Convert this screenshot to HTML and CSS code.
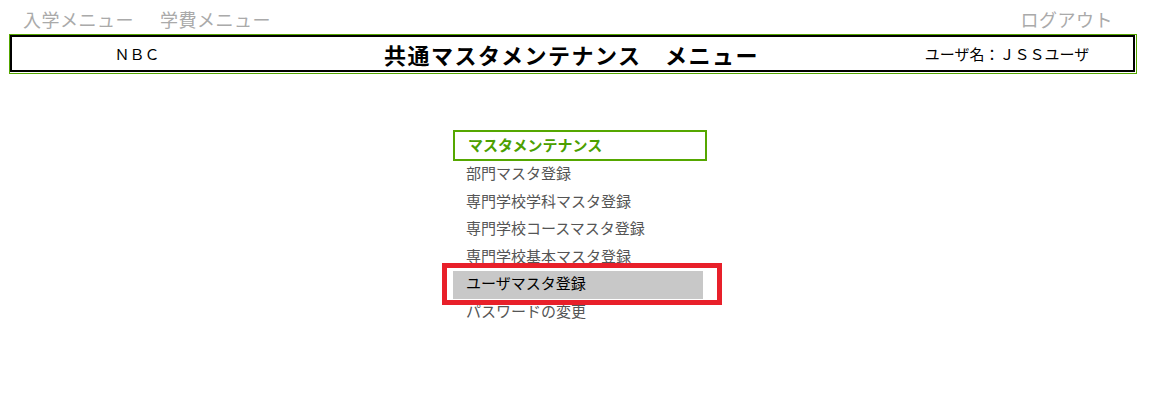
FILE: index.html
```html
<html>
<head>
    <meta charset="UTF-8">
    <link rel="stylesheet" href="styles.css">
</head>

<body>

<div class="page">
    <div class="topbar">
        <div class="nav">
            <a href="#" class="nav_link">入学メニュー</a>
            <a href="#" class="nav_link">学費メニュー</a>
        </div>
        <a href="#" class="nav_link">ログアウト</a>
    </div>

    <div class="header">
        <div class="header_inner">
            <div class="header_left">ＮＢＣ</div>
            <div class="header_title">共通マスタメンテナンス　メニュー</div>
            <div class="header_right">ユーザ名：ＪＳＳユーザ</div>
        </div>
    </div>

    <div class="menu">
        <div class="menu_title">マスタメンテナンス</div>
        <ul class="menu_list">
            <li><a href="#">部門マスタ登録</a></li>
            <li><a href="#">専門学校学科マスタ登録</a></li>
            <li><a href="#">専門学校コースマスタ登録</a></li>
            <li><a href="#">専門学校基本マスタ登録</a></li>
            <li class="selected"><a href="#">ユーザマスタ登録</a></li>
            <li><a href="#">パスワードの変更</a></li>
        </ul>
        <!--注目枠-->
        <div class="mark"></div>
    </div>
</div>

</body>

</html>
```

FILE: styles.css
```css
body {
    margin: 0;
    font-family: "Noto Sans CJK JP", "Liberation Sans", sans-serif;
    background: white;
}

.page {
    width: 1128px;
    margin-left: 9px;
}

.topbar {
    height: 34px;
    display: flex;
    justify-content: space-between;
    align-items: center;
    padding: 4px 24px 0 14px;
    box-sizing: border-box;
}

.nav {
    display: flex;
    gap: 26px;
}

.nav_link {
    font-size: 18px;
    line-height: 20px;
    letter-spacing: 0.5px;
    color: #aaaaaa;
    text-decoration: none;
}

.header {
    border: 1px solid #55a700;
    padding: 0 1px 1px 0;
}

.header_inner {
    height: 33px;
    border: 2px solid black;
    display: grid;
    grid-template-columns: 254px 1fr 252px;
    align-items: center;
    text-align: center;
}

.header_left,
.header_right {
    font-size: 15px;
    color: black;
}

.header_left {
    padding-right: 4px;
}

.header_title {
    font-size: 22px;
    font-weight: bold;
    letter-spacing: 1.5px;
    padding-right: 4px;
    color: black;
}

.menu {
    position: relative;
    width: 254px;
    margin: 56px 0 0 444px;
}

.menu_title {
    height: 27px;
    border: 2px solid #55a700;
    padding-left: 13px;
    font-size: 15px;
    font-weight: bold;
    line-height: 26px;
    color: #4ca000;
}

.menu_list {
    list-style: none;
    margin: 0;
    padding: 0;
}

.menu_list li {
    width: 250px;
    height: 27.5px;
    padding-left: 13px;
    box-sizing: border-box;
    line-height: 24px;
    font-size: 15px;
}

.menu_list a {
    color: #555555;
    text-decoration: none;
}

.menu_list li.selected {
    background: #c8c8c8;
}

.menu_list li.selected a {
    color: black;
}

.mark {
    position: absolute;
    left: -11px;
    top: 133px;
    width: 270px;
    height: 32px;
    border: 5px solid #e8202a;
}
```
